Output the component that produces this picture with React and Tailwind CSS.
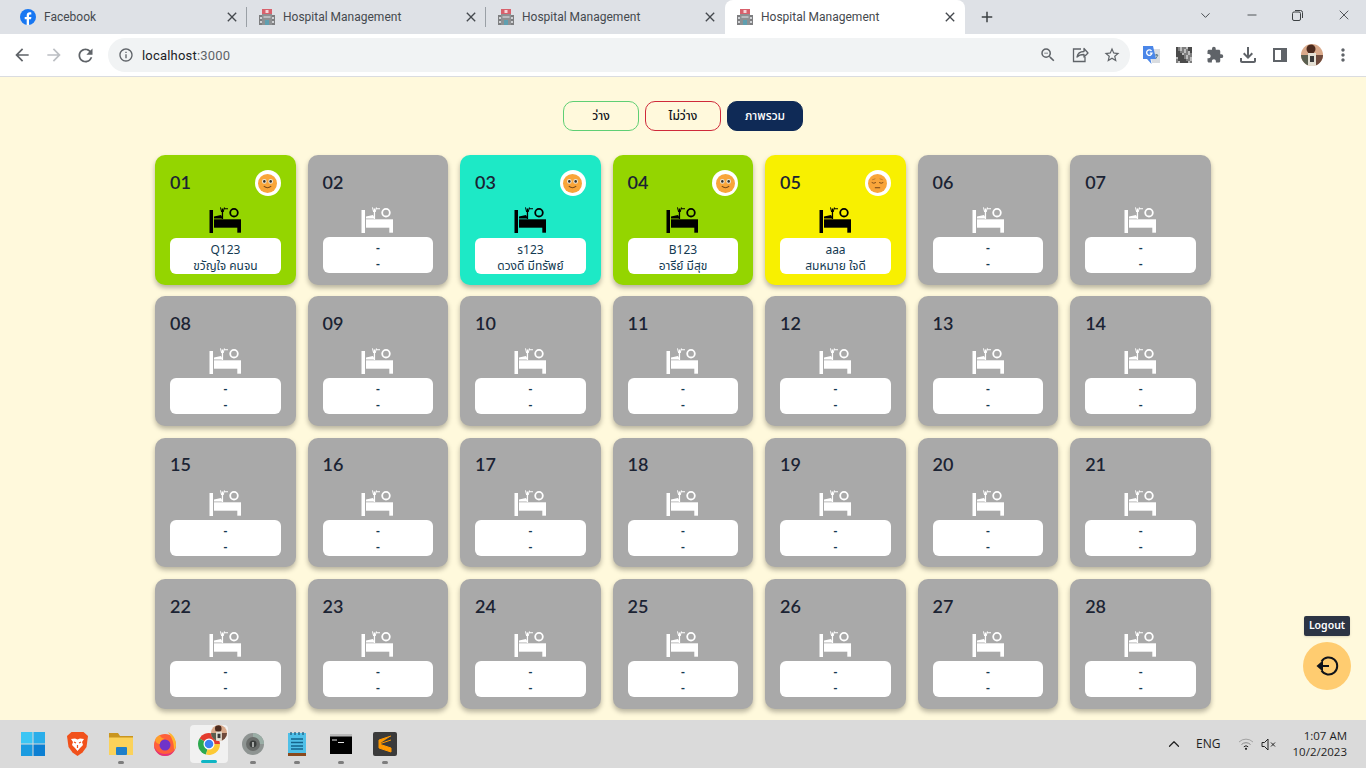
import { ChevronDown, ChevronUp, Minus, X } from "lucide-react"
import { MdArrowBack, MdArrowForward, MdRefresh, MdInfoOutline, MdZoomOut, MdStarBorder, MdExtension, MdMoreVert, MdAdd, MdClose, MdOutlineFileDownload } from "react-icons/md"

const beds = [
  { no: "01", code: "Q123", name: "ขวัญใจ คนจน", color: "bg-[#94d500]", mood: "happy" },
  { no: "02" },
  { no: "03", code: "s123", name: "ดวงดี มีทรัพย์", color: "bg-[#1de9c6]", mood: "happy" },
  { no: "04", code: "B123", name: "อารีย์ มีสุข", color: "bg-[#94d500]", mood: "happy" },
  { no: "05", code: "aaa", name: "สมหมาย ใจดี", color: "bg-[#f8f000]", mood: "sad" },
  ...Array.from({ length: 23 }, (_, i) => ({ no: String(i + 6).padStart(2, "0") })),
]

function Favicon() {
  return (
    <svg width="16" height="16" viewBox="0 0 16 16" className="shrink-0">
      <rect x="0" y="6" width="16" height="10" fill="#7d7e80" />
      <rect x="3" y="3" width="10" height="13" fill="#8f9092" />
      <rect x="3" y="0" width="10" height="5" fill="#d8616c" />
      <rect x="6.500" y="1" width="3" height="3" fill="#f4d6d8" />
      <rect x="1" y="8" width="2" height="2" fill="#cfd1d4" />
      <rect x="13" y="8" width="2" height="2" fill="#cfd1d4" />
      <rect x="1" y="12" width="2" height="2" fill="#cfd1d4" />
      <rect x="13" y="12" width="2" height="2" fill="#cfd1d4" />
      <rect x="4.500" y="7" width="7" height="2" fill="#b9bbbe" />
      <rect x="6" y="11" width="4" height="5" fill="#5f9fb0" />
    </svg>
  )
}

function FacebookIcon() {
  return (
    <svg width="16" height="16" viewBox="0 0 16 16" className="shrink-0">
      <circle cx="8" cy="8" r="8" fill="#1877f2" />
      <path d="M11 10.300l.4-2.300H9V6.600c0-.7.3-1.200 1.300-1.200h1V3.400s-.8-.2-1.600-.2C7.900 3.200 6.700 4.300 6.700 6.300V8H4.700v2.300h2V16h2.300v-5.700z" fill="#fff" />
    </svg>
  )
}

function Tab({ title, active, divider, facebook }) {
  return (
    <div className={`relative flex h-[34px] shrink-0 items-center pl-[12px] pr-[7px] ${active ? "w-[240px] rounded-t-lg bg-white" : "w-[239px]"}`}>
      {facebook ? <FacebookIcon /> : <Favicon />}
      <span className="ml-[8px] flex-1 text-[12px] text-[#45494e] font-['Roboto',sans-serif]">{title}</span>
      <MdClose size={16} className="text-[#45494e]" />
      {divider && <div className="absolute right-0 top-[7px] h-[20px] w-px bg-[#9aa0a6]" />}
    </div>
  )
}

function BedIcon({ className }) {
  return (
    <svg width="33" height="26" viewBox="0 0 33 26" className={className} fill="currentColor">
      <rect x="0.500" y="3" width="3.500" height="23" />
      <rect x="5" y="12.300" width="27" height="8.400" />
      <rect x="28.300" y="20" width="3.700" height="5.700" />
      <path d="M5 11.500V9.500l7-1.500 2 3.500z" />
      <rect x="12.800" y="1.500" width="1.300" height="10.500" />
      <path d="M11 0.500l.9-.3.9 3.300h1.300l.9-3.300.9.3-1.200 4.500h-2.600zM15.500 1.200h3.500v1h-3.500z" />
      <circle cx="25" cy="5.700" r="3.800" fill="none" stroke="currentColor" strokeWidth="1.800" />
    </svg>
  )
}

function Face({ mood }) {
  return (
    <div className="flex h-[26px] w-[26px] items-center justify-center rounded-full bg-white">
      <svg width="19" height="19" viewBox="0 0 18 18">
        <circle cx="9" cy="9" r="9" fill="#f9a53a" />
        {mood === "happy" ? (
          <>
            <circle cx="6" cy="7" r="2.200" fill="#e8e6dc" />
            <circle cx="12" cy="7" r="2.200" fill="#e8e6dc" />
            <circle cx="6" cy="7" r="1.200" fill="#33302c" />
            <circle cx="12" cy="7" r="1.200" fill="#33302c" />
            <path d="M5.500 11.500q3.500 3 7 0" fill="none" stroke="#7a4a18" strokeWidth="1" />
          </>
        ) : (
          <>
            <path d="M3.500 8q2 1.500 4 0M10.500 8q2 1.500 4 0" fill="none" stroke="#7a4a18" strokeWidth="0.900" />
            <path d="M4 5.500l3-1M14 5.500l-3-1" fill="none" stroke="#b8752a" strokeWidth="0.800" />
            <path d="M6.500 13h5" fill="none" stroke="#7a4a18" strokeWidth="1" />
          </>
        )}
      </svg>
    </div>
  )
}

function BedCard({ no, code, name, color, mood }) {
  const busy = Boolean(code)
  return (
    <div className={`flex h-[129.5px] flex-col rounded-[10px] px-[15px] shadow-[0_3px_5px_rgba(0,0,0,0.28)] ${busy ? color : "bg-[#a9a9a9]"}`}>
      <div className="mt-[15px] flex h-[26px] items-center justify-between">
        <span className="pb-[2px] text-[18px] font-semibold text-[#1b2333] font-['Lato','Noto_Sans',sans-serif]">{no}</span>
        {busy && <Face mood={mood} />}
      </div>
      <div className="mt-[11px] flex justify-center">
        <BedIcon className={busy ? "text-black" : "text-white"} />
      </div>
      <div className={`flex h-[36px] flex-col items-center justify-center rounded-[6px] bg-white text-[12px] leading-[16px] text-[#143a52] font-['Noto_Sans','Noto_Sans_Thai',sans-serif] ${busy ? "mt-[5px] pt-[4px]" : "mt-[4px] pt-[2px] font-semibold"}`}>
        <span>{code || "-"}</span>
        <span>{name || "-"}</span>
      </div>
    </div>
  )
}

function FilterButton({ label, className }) {
  return (
    <button className={`h-[30px] w-[76px] rounded-[10px] border text-[12px] font-medium font-['Noto_Sans','Noto_Sans_Thai',sans-serif] ${className}`}>
      {label}
    </button>
  )
}

function TaskIcon({ children, dot = true, active }) {
  return (
    <div className={`relative mx-[3px] flex h-[38px] w-[38px] items-center justify-center rounded-[4px] ${active ? "bg-[#f1f1f1]" : ""}`}>
      {children}
      {dot && !active && <div className="absolute bottom-[-1px] h-[3px] w-[6px] rounded-full bg-[#7d7d7d]" />}
      {active && <div className="absolute bottom-0 h-[3px] w-[16px] rounded-full bg-[#0fb5c4]" />}
    </div>
  )
}

// grainy blocks for the qr extension icon
const qrCells = Array.from({ length: 64 }, (_, i) => ((i * 37 + (i % 5) * 11) % 7 < 3 ? "#4a4a4a" : (i * 13) % 5 < 2 ? "#bdbdbd" : "#7e7e7e"))

function QrIcon() {
  return (
    <svg width="16" height="16" viewBox="0 0 16 16" className="ml-[16px]">
      {qrCells.map((c, i) => (
        <rect key={i} x={(i % 8) * 2} y={Math.floor(i / 8) * 2} width="2" height="2" fill={c} />
      ))}
    </svg>
  )
}

function Avatar({ size, className }) {
  return (
    <svg width={size} height={size} viewBox="0 0 22 22" className={className}>
      <clipPath id={`av${size}`}>
        <circle cx="11" cy="11" r="11" />
      </clipPath>
      <g clipPath={`url(#av${size})`}>
        <rect width="22" height="22" fill="#d9a98a" />
        <circle cx="10" cy="5" r="4.500" fill="#4b2a1e" />
        <rect x="0" y="11" width="7" height="11" fill="#5a5f50" />
        <rect x="7" y="9" width="8" height="13" fill="#e4e0d4" />
        <rect x="9" y="12" width="4" height="6" fill="#3a3a3a" />
        <rect x="15" y="11" width="7" height="11" fill="#6e4a3c" />
      </g>
    </svg>
  )
}

export default function App() {
  return (
    <div className="relative flex h-[768px] w-[1366px] flex-col overflow-hidden bg-[#fff9dc] font-['Noto_Sans',sans-serif]">
      {/* browser chrome */}
      <div className="flex h-[34px] shrink-0 items-end bg-[#dee1e6]">
        <div className="flex pl-[8px]">
          <Tab title="Facebook" facebook divider />
          <Tab title="Hospital Management" divider />
          <Tab title="Hospital Management" />
          <Tab title="Hospital Management" active />
        </div>
        <div className="flex h-[34px] items-center pl-[13px]">
          <MdAdd size={18} className="text-[#3c4043]" />
        </div>
        <div className="ml-auto flex h-[30px] items-center self-start text-[#3c4043]">
          <ChevronDown size={15} strokeWidth={1.5} className="mr-[32px]" />
          <Minus size={14} strokeWidth={1.5} className="mr-[33px]" />
          <svg width="11" height="11" viewBox="0 0 11 11" fill="none" stroke="currentColor" className="mr-[33px]">
            <rect x="0.500" y="2" width="8" height="8.500" rx="1.500" />
            <path d="M3 .5h5.500a2 2 0 0 1 2 2V8" />
          </svg>
          <X size={16} strokeWidth={1.3} className="mr-[14px]" />
        </div>
      </div>
      <div className="flex h-[43px] shrink-0 items-center border-b border-[#dadce0] bg-white text-[#5f6368]">
        <MdArrowBack size={20} className="ml-[12px]" />
        <MdArrowForward size={20} className="ml-[12px] text-[#bcbfc3]" />
        <MdRefresh size={21} className="ml-[11px]" />
        <div className="ml-[12px] flex h-[34px] w-[1022px] items-center rounded-full bg-[#f1f3f4] pl-[10px]">
          <MdInfoOutline size={16} />
          <span className="ml-[8px] flex-1 pt-px text-[13px] text-[#202124] font-['Roboto',sans-serif] tracking-[0.2px]">localhost<span className="text-[#5f6368]">:3000</span></span>
          <MdZoomOut size={18} className="mr-[15px]" />
          <svg width="17" height="16" viewBox="0 0 17 16" fill="none" stroke="currentColor" strokeWidth="1.300" className="mr-[14px]">
            <path d="M9 2H1.500v12.500H13V10" />
            <path d="M5 10c.6-3.500 3.500-5.500 7-5.500V1.500L16 6l-4 4V7.500c-3 0-5.500 .8-7 2.500z" strokeLinejoin="round" />
          </svg>
          <MdStarBorder size={18} className="mr-[9px]" />
        </div>
        <svg width="17" height="19" viewBox="0 0 17 19" className="ml-[13px]">
          <path d="M6 3h11v14H9z" fill="#d9dce0" />
          <path d="M12 9h3M13.500 8v1.500M12.500 13l2.500-4" stroke="#5f7f8f" strokeWidth="1" fill="none" />
          <path d="M0 0h10l3 13H7.500l1 5L4 13H0z" fill="#4a86e8" />
          <path d="M8.500 5A2.700 2.700 0 1 0 9 7.200H6.800" fill="none" stroke="#fff" strokeWidth="1.300" />
        </svg>
        <QrIcon />
        <MdExtension size={18} className="ml-[14px]" />
        <MdOutlineFileDownload size={24} className="ml-[12px]" />
        <svg width="14" height="14" viewBox="0 0 14 14" className="ml-[13px]">
          <rect x="1" y="1" width="12" height="12" fill="none" stroke="#5f6368" strokeWidth="2" />
          <rect x="8" y="1" width="5" height="12" fill="#5f6368" />
        </svg>
        <Avatar size={22} className="ml-[14px]" />
        <MdMoreVert size={20} className="ml-[10px]" />
      </div>

      {/* page */}
      <div className="relative min-h-0 flex-1 overflow-hidden">
        <div className="flex justify-center gap-[6px] pt-[24px]">
          <FilterButton label="ว่าง" className="border-[#5fcf74] text-[#10131a]" />
          <FilterButton label="ไม่ว่าง" className="border-[#cf2a3a] text-[#10131a]" />
          <FilterButton label="ภาพรวม" className="border-[#0f2a56] bg-[#0f2a56] text-white" />
        </div>
        <div className="mx-[155px] mt-[24px] grid grid-cols-7 gap-x-[11.67px] gap-y-[11.9px]">
          {beds.map((bed) => (
            <BedCard key={bed.no} {...bed} />
          ))}
        </div>
        {/* logout */}
        <div className="absolute bottom-[30px] right-[15px] flex w-[48px] flex-col items-center">
          <div className="mb-[6px] whitespace-nowrap rounded-[2px] bg-[#2c3444] px-[5px] py-[2px] text-[10.500px] font-semibold text-white shadow">Logout</div>
          <button className="flex h-[48px] w-[48px] items-center justify-center rounded-full bg-[#ffcc70]">
            <svg width="24" height="24" viewBox="0 0 24 24" fill="none" stroke="#10131a" strokeWidth="2">
              <path d="M6.500 7.500a8.500 8.500 0 1 1 0 9" />
              <path d="M14 12H4" />
              <path d="M7 8.500L3 12l4 3.500z" fill="#10131a" />
            </svg>
          </button>
        </div>
      </div>

      {/* taskbar */}
      <div className="flex h-[48px] shrink-0 items-center bg-[#dadada] pl-[11px]">
        <TaskIcon dot={false}>
          <svg width="24" height="24" viewBox="0 0 24 24">
            <rect x="0" y="0" width="11.500" height="11.500" fill="#3cc6f4" />
            <rect x="12.500" y="0" width="11.500" height="11.500" fill="#2aaeea" />
            <rect x="0" y="12.500" width="11.500" height="11.500" fill="#1a9be0" />
            <rect x="12.500" y="12.500" width="11.500" height="11.500" fill="#0c7fd2" />
          </svg>
        </TaskIcon>
        <TaskIcon dot={false}>
          <svg width="21" height="24" viewBox="0 0 21 24">
            <path d="M4.500 0h12L21 4l-1.500 11-4 5.500L10.500 24l-5-3.500-4-5.500L0 4z" fill="#f1511b" />
            <path d="M4 7l4-.5 2.500 1 2.500-1 4 .5-2 3 1 3-3 3-2.500 3-2.500-3-3-3 1-3z" fill="#fff" />
            <path d="M7 10l2 1M14 10l-2 1M10.500 13v3" stroke="#f1511b" strokeWidth="1.200" />
          </svg>
        </TaskIcon>
        <TaskIcon>
          <svg width="24" height="22" viewBox="0 0 24 22">
            <path d="M0 0h9l2 3h13v19H0z" fill="#c9951f" />
            <rect x="0" y="4.500" width="24" height="17.500" fill="#fbd25a" />
            <rect x="7" y="14" width="11" height="8" rx="1" fill="#1f7fc9" />
          </svg>
        </TaskIcon>
        <TaskIcon dot={false}>
          <svg width="24" height="24" viewBox="0 0 24 24">
            <circle cx="12" cy="13" r="11" fill="#ff5f3a" />
            <path d="M1 13a11 11 0 0 0 22 0c0 6-5 9-11 9S2 18 1 13z" fill="#e0327e" />
            <path d="M15 0c5 2 8 7 8 13 0 2-1 4-2 5 0-6-1-11-6-18z" fill="#ffb52e" />
            <circle cx="12" cy="13" r="5.500" fill="#6f33c9" />
            <path d="M2 8c1-3 3-4 5-5 0 2 2 3 5 4-3 0-5 2-5 5-2 0-4-1-5-4z" fill="#ff9d2b" />
          </svg>
        </TaskIcon>
        <TaskIcon active>
          <svg width="24" height="24" viewBox="0 0 24 24">
            <path d="M12 12L2.500 6.500A11 11 0 0 1 23 12z" fill="#e33b2e" />
            <path d="M12 12L2.500 6.500A11 11 0 0 0 9 22.600z" fill="#2da94f" />
            <path d="M12 12l11 0A11 11 0 0 1 9 22.600z" fill="#fcc934" />
            <circle cx="12" cy="12" r="5.500" fill="#fff" />
            <circle cx="12" cy="12" r="4.300" fill="#3b82f1" />
          </svg>
          <Avatar size={16} className="absolute right-[1px] top-0" />
        </TaskIcon>
        <TaskIcon>
          <svg width="22" height="22" viewBox="0 0 22 22">
            <circle cx="11" cy="11" r="11" fill="#8e9492" />
            <path d="M11 0a11 11 0 0 1 11 11h-5a6 6 0 0 0-6-6z" fill="#9aaea6" />
            <circle cx="11" cy="11" r="7" fill="#6a6d6b" />
            <circle cx="11" cy="11" r="3.500" fill="#3a3d3c" />
            <rect x="10" y="9" width="2" height="5" fill="#a5a8a6" />
          </svg>
        </TaskIcon>
        <TaskIcon>
          <svg width="18" height="24" viewBox="0 0 18 24">
            <rect x="0" y="1" width="18" height="20" fill="#4fc0e8" />
            <rect x="0" y="21" width="18" height="3" fill="#8a4a1e" />
            <path d="M3 0v3M7 0v3M11 0v3M15 0v3" stroke="#1f5f80" strokeWidth="1.300" />
            <path d="M3 7h12M3 10.500h12M3 14h12M3 17h12" stroke="#14648c" strokeWidth="1.300" />
          </svg>
        </TaskIcon>
        <TaskIcon>
          <svg width="22" height="20" viewBox="0 0 22 20">
            <rect x="0" y="0" width="22" height="20" fill="#000" />
            <rect x="0" y="0" width="22" height="2.500" fill="#b9b9b9" />
            <path d="M2 6h5M8 8.500h6" stroke="#e5e5e5" strokeWidth="1.200" />
          </svg>
        </TaskIcon>
        <TaskIcon>
          <svg width="24" height="24" viewBox="0 0 24 24">
            <rect width="24" height="24" rx="2" fill="#3b3b3b" />
            <path d="M18 4L6 8v4l12 4v4L6 16v-4M6 12l12-4" fill="#ff9800" stroke="#ff9800" strokeWidth="1" />
          </svg>
        </TaskIcon>
        <div className="ml-auto flex items-center text-[#1f1f1f]">
          <ChevronUp size={18} strokeWidth={1.6} className="mr-[13px]" />
          <span className="mr-[17px] text-[12px] font-['Open_Sans',sans-serif]">ENG</span>
          <svg width="16" height="12" viewBox="0 0 16 12" fill="none" className="mr-[7px]">
            <path d="M1 4a10 10 0 0 1 14 0" stroke="#a3a3a3" />
            <path d="M3.500 6.500a6.500 6.500 0 0 1 9 0" stroke="#8a8a8a" />
            <path d="M5.800 8.800a3.200 3.200 0 0 1 4.400 0" stroke="#222" />
            <circle cx="8" cy="10.800" r="1.100" fill="#222" />
          </svg>
          <svg width="16" height="13" viewBox="0 0 16 13" fill="none" stroke="#222" className="mr-[16px]">
            <path d="M1 4.500h2.500L7 1v11L3.500 8.500H1z" />
            <path d="M10 4.500l4 4M14 4.500l-4 4" />
          </svg>
          <div className="mr-[19px] flex flex-col items-end text-[11.500px] leading-[16px] font-['Open_Sans',sans-serif]">
            <span>1:07 AM</span>
            <span>10/2/2023</span>
          </div>
        </div>
      </div>
    </div>
  )
}
